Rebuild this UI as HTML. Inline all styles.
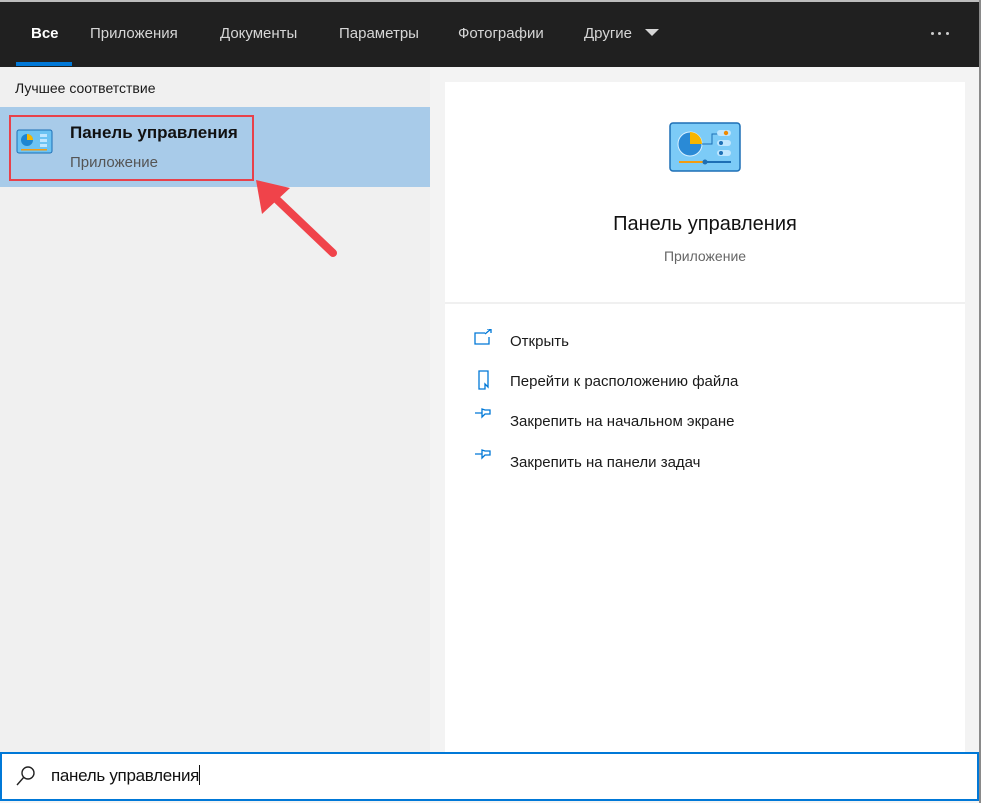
<!DOCTYPE html>
<html><head><meta charset="utf-8"><style>
*{margin:0;padding:0;box-sizing:border-box}
body{width:981px;height:803px;position:relative;overflow:hidden;background:#f3f3f3;font-family:"Segoe UI","Liberation Sans","DejaVu Sans",sans-serif}
.top{position:absolute;left:0;top:0;width:981px;height:2px;background:#bdbdbd}
.hdr{position:absolute;left:0;top:2px;width:979px;height:65px;background:#202020}
.tab{position:absolute;top:25px;font-size:15px;color:#d6d6d6}
.rb{position:absolute;right:0;top:0;width:2px;height:803px;background:#8a8a8a}
.left{position:absolute;left:0;top:67px;width:430px;height:686px;background:#f0f0f0}
.card{position:absolute;left:445px;top:82px;width:520px;height:671px;background:#fff}
.sep{position:absolute;left:445px;top:302px;width:520px;height:2px;background:#f0f0f0}
.act{position:absolute;left:510px;font-size:15px;color:#1a1a1a}
.dot{position:absolute;top:32px;width:3px;height:3px;background:#ccc;border-radius:50%}
</style></head><body>
<div class="top"></div>
<div class="hdr"></div>
<div class="tab" style="left:31px;color:#fff;font-weight:bold">Все</div>
<div style="position:absolute;left:16px;top:62px;width:56px;height:4px;background:#0078d7"></div>
<div class="tab" style="left:90px">Приложения</div>
<div class="tab" style="left:220px">Документы</div>
<div class="tab" style="left:339px">Параметры</div>
<div class="tab" style="left:458px">Фотографии</div>
<div class="tab" style="left:584px">Другие</div>
<svg style="position:absolute;left:645px;top:29px" width="14" height="9"><path d="M0 0H14L7 7Z" fill="#d6d6d6"/></svg>
<div class="dot" style="left:931px"></div><div class="dot" style="left:938px"></div><div class="dot" style="left:946px"></div>
<div class="left"></div>
<div style="position:absolute;left:15px;top:80px;font-size:14px;color:#1a1a1a">Лучшее соответствие</div>
<div style="position:absolute;left:0;top:107px;width:430px;height:80px;background:#a8cbe9"></div>
<div style="position:absolute;left:9px;top:115px;width:245px;height:66px;border:2px solid #e8414a"></div>
<svg style="position:absolute;left:16px;top:129px" width="38" height="26" viewBox="0 0 38 26"><rect x="1" y="1" width="35" height="23" rx="2" fill="#6cc3f3" stroke="#1d6fb5"/><circle cx="11" cy="11" r="6" fill="#1e86d1"/><path d="M11 5A6 6 0 0 1 17 11H11Z" fill="#f7b800"/><rect x="24" y="5" width="7" height="3" fill="#bfe6ff"/><rect x="24" y="10" width="7" height="3" fill="#bfe6ff"/><rect x="24" y="15" width="7" height="3" fill="#bfe6ff"/><rect x="5" y="20" width="26" height="1.5" fill="#f39c12"/></svg>
<div style="position:absolute;left:70px;top:123px;font-size:17px;font-weight:bold;color:#111">Панель управления</div>
<div style="position:absolute;left:70px;top:154px;font-size:15px;color:#555">Приложение</div>
<svg style="position:absolute;left:250px;top:176px" width="95" height="90"><path d="M83 77L20 17" stroke="#f0434a" stroke-width="8" stroke-linecap="round"/><path d="M6 4L40 12L12 38Z" fill="#f0434a"/></svg>
<div class="card"></div>
<div class="sep"></div>
<svg style="position:absolute;left:669px;top:122px" width="72" height="52" viewBox="0 0 72 52"><rect x="1" y="1" width="70" height="48" rx="3" fill="#7ccbf7" stroke="#1d6fb5" stroke-width="1.5"/><circle cx="21" cy="22" r="12" fill="#2a8ad6" stroke="#d8f0ff"/><path d="M21 10A12 12 0 0 1 33 22H21Z" fill="#f7b500"/><path d="M33 22H43V12H49" stroke="#1d6fb5" fill="none"/><rect x="48" y="8" width="14" height="6" rx="3" fill="#bfe6ff"/><circle cx="57" cy="11" r="2.2" fill="#f08a00"/><rect x="48" y="18" width="14" height="6" rx="3" fill="#bfe6ff"/><circle cx="52" cy="21" r="2" fill="#1d6fb5"/><rect x="48" y="28" width="14" height="6" rx="3" fill="#bfe6ff"/><circle cx="52" cy="31" r="2" fill="#1d6fb5"/><rect x="10" y="39" width="26" height="2" fill="#f39c12"/><rect x="36" y="39" width="26" height="2" fill="#1d6fb5"/><circle cx="36" cy="40" r="2.5" fill="#1d6fb5"/></svg>
<div style="position:absolute;left:445px;top:213px;width:520px;text-align:center;font-size:20px;color:#111">Панель управления</div>
<div style="position:absolute;left:445px;top:248px;width:520px;text-align:center;font-size:14px;color:#666">Приложение</div>
<svg style="position:absolute;left:474px;top:329px" width="22" height="150" fill="none" stroke="#0078d7" stroke-width="1.3"><path d="M11 4H1V15H15V8M11 5L17 0M13 0H17V4"/><path d="M5 42H14V58L11 55V60H5Z"/><path d="M1 84H8M8 80V88L11 85H16V81H11Z"/><path d="M1 125H8M8 121V129L11 126H16V122H11Z"/></svg>
<div class="act" style="top:333px">Открыть</div>
<div class="act" style="top:373px">Перейти к расположению файла</div>
<div class="act" style="top:413px">Закрепить на начальном экране</div>
<div class="act" style="top:454px">Закрепить на панели задач</div>
<div style="position:absolute;left:0;top:752px;width:979px;height:49px;background:#fff;border:2px solid #0078d7"></div>
<svg style="position:absolute;left:14px;top:764px" width="24" height="24" fill="none" stroke="#222" stroke-width="1.4"><circle cx="14" cy="9" r="6"/><path d="M10 13L3 21"/></svg>
<div style="position:absolute;left:51px;top:765px;font-size:17px;color:#111;letter-spacing:-0.3px">панель управления<span style="display:inline-block;width:1px;height:20px;background:#111;vertical-align:-4px"></span></div>
<div class="rb"></div>
</body></html>
